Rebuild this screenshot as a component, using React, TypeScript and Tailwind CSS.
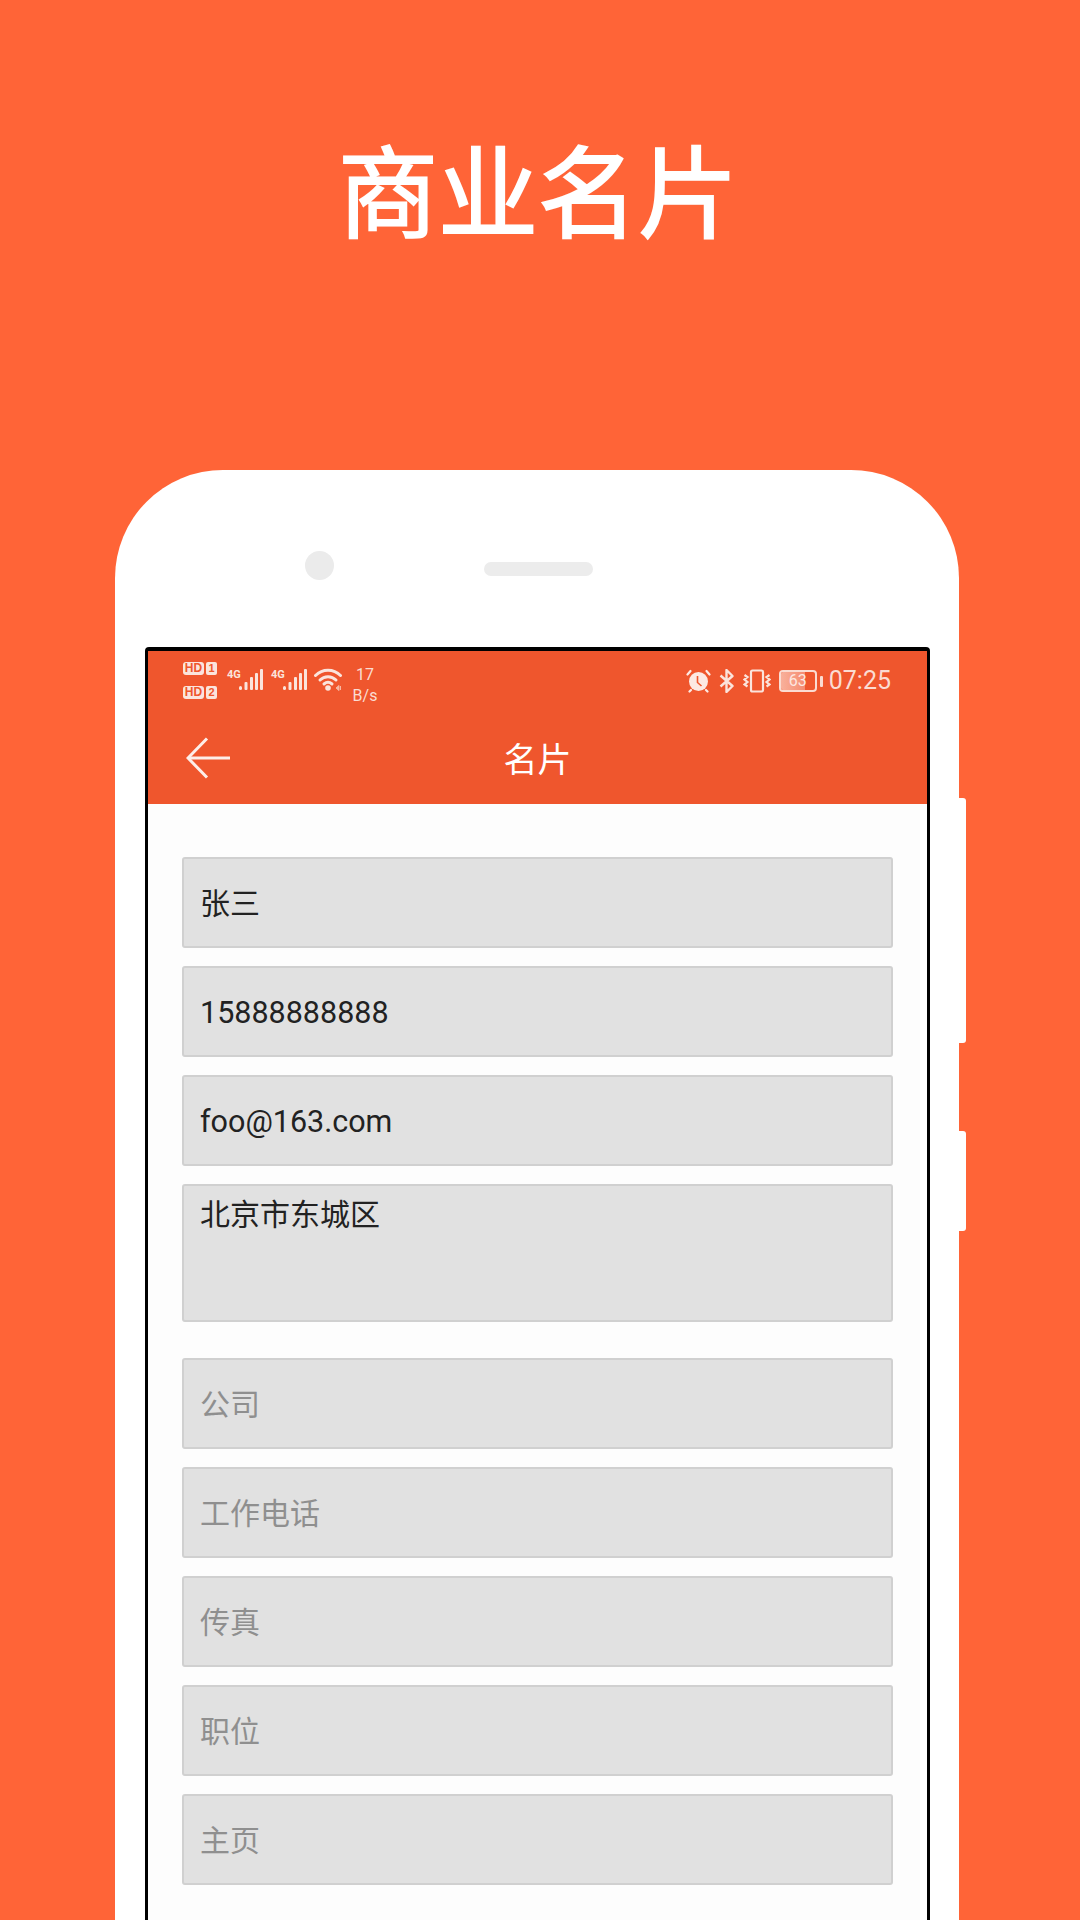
const cjk = "font-['Roboto','Noto_Sans_CJK_SC',sans-serif]"

function HdBadge({ n }: { n: string }) {
  return (
    <div className="flex items-center gap-[2px] h-[13px]">
      <span className="w-[21px] h-[13px] rounded-[3px] bg-[#fbe4dc] text-[#ef562d] text-[12px] leading-[13px] font-bold text-center font-['Liberation_Sans',sans-serif]">
        HD
      </span>
      <span className="w-[11px] h-[13px] rounded-[2px] bg-[#fbe4dc] text-[#ef562d] text-[11px] leading-[13px] font-bold text-center font-['Liberation_Sans',sans-serif]">
        {n}
      </span>
    </div>
  )
}

function Signal() {
  return (
    <div className="flex items-start h-[24px]">
      <span className="text-[#fbe4dc] text-[11px] leading-[11px] font-bold font-['Roboto',sans-serif] mt-[1px] w-[13px]">4G</span>
      <svg width="24" height="24" viewBox="0 0 24 24" className="-ml-[1px]">
        <g fill="#fbe4dc">
          <rect x="0" y="18" width="3" height="4" rx="1.5" />
          <rect x="5.5" y="14" width="3" height="8" rx="1" />
          <rect x="11" y="9" width="3" height="13" rx="1" />
          <rect x="16" y="5" width="3" height="17" rx="1" />
          <rect x="21" y="1" width="3" height="21" rx="1" />
        </g>
      </svg>
    </div>
  )
}

function Wifi() {
  return (
    <svg width="30" height="26" viewBox="0 0 30 26">
      <g fill="none" stroke="#fbe4dc" strokeWidth="3" strokeLinecap="round">
        <path d="M1.500 8.500C8.500 1.500 19.500 1.500 26.500 8.500" />
        <path d="M6 13C10.500 8.500 17.500 8.500 22 13" />
        <path d="M10 17C12.500 14.800 15.500 14.800 18 17" />
      </g>
      <circle cx="14" cy="21" r="2.800" fill="#fbe4dc" />
      <path d="M22 21l3-2.500v5zM26.500 19v4" stroke="#f7b7a2" strokeWidth="1" fill="#f7b7a2" />
    </svg>
  )
}

function Alarm() {
  return (
    <svg width="25" height="24" viewBox="0 0 25 24">
      <circle cx="12.500" cy="12.500" r="9.500" fill="#fde9e3" />
      <path d="M11.500 7v6.500l4 3.500" fill="none" stroke="#ef562d" strokeWidth="1.600" />
      <path d="M1.500 5.500L4.500 2M23.500 5.500L20.500 2M5 21l-1.500 1.500M20 21l1.500 1.500" stroke="#fde9e3" strokeWidth="2.200" strokeLinecap="round" />
    </svg>
  )
}

function Bluetooth() {
  return (
    <svg width="16" height="24" viewBox="0 0 16 24" fill="none" stroke="#fbe4dc" strokeWidth="2.400" strokeLinejoin="round">
      <path d="M1.500 6.500L13.500 17 7.500 23V1l6 6L1.500 17.500" />
    </svg>
  )
}

function Vibrate() {
  return (
    <svg width="28" height="24" viewBox="0 0 28 24" fill="none" stroke="#fbe4dc" strokeWidth="2.200">
      <rect x="8" y="1.500" width="12" height="21" rx="1.500" />
      <path d="M1.500 6l3 2-3 2.500 3 2.500-3 2.500 3 2M26.500 6l-3 2 3 2.500-3 2.500 3 2.500-3 2" />
    </svg>
  )
}

function Battery() {
  return (
    <div className="flex items-center gap-[3px]">
      <div className="relative w-[38px] h-[22px] border-2 border-[#fbdcd2] rounded-[4px] overflow-hidden">
        <div className="h-full w-[24px] bg-gradient-to-r from-[#f8b09b] to-[#f58c70]" />
        <span className="absolute inset-0 text-center text-[#fde8e1] text-[16px] leading-[18px] font-['Roboto',sans-serif]">63</span>
      </div>
      <div className="w-[3px] h-[11px] bg-[#fbdcd2] rounded-[1px]" />
    </div>
  )
}

function StatusBar() {
  return (
    <div className="h-[64px] pl-[35px] pr-[36px] flex items-start justify-between">
      <div className="flex items-start pt-[11px]">
        <div className="flex flex-col gap-[11px] w-[44px]">
          <HdBadge n="1" />
          <HdBadge n="2" />
        </div>
        <div className="flex items-start gap-[8px] pt-[6px]">
          <Signal />
          <Signal />
          <div className="ml-[-1px] mt-[-1px]"><Wifi /></div>
        </div>
        <div className="ml-[6px] w-[30px] text-center text-[#fbdcd2] text-[16px] leading-[21px] font-['Roboto',sans-serif] mt-[2px]">
          <div>17</div>
          <div>B/s</div>
        </div>
      </div>
      <div className="flex items-center gap-[8px] pt-[17px]">
        <Alarm />
        <Bluetooth />
        <Vibrate />
        <Battery />
        <span className="-ml-[2px] text-[#fbdcd2] text-[25px] leading-[26px] font-['Roboto',sans-serif]">07:25</span>
      </div>
    </div>
  )
}

function Field({ text, placeholder, tall, latin }: { text?: string; placeholder?: string; tall?: boolean; latin?: boolean }) {
  const color = placeholder ? "text-[#8f8f8f]" : "text-[#222222]"
  const size = latin ? "text-[30.5px]" : "text-[30px]"
  return (
    <div
      className={
        tall
          ? `h-[138px] pt-[9px] pl-[16px] bg-[#e1e1e1] border-2 border-[#d0d0d0] rounded-[3px] leading-[40px] ${size} ${color} ${cjk}`
          : `h-[91px] pt-[25px] pl-[16px] bg-[#e1e1e1] border-2 border-[#d0d0d0] rounded-[3px] leading-[40px] ${size} ${color} ${cjk}`
      }
    >
      {text || placeholder}
    </div>
  )
}

export default function App() {
  return (
    <main className="w-[1080px] h-[1920px] overflow-hidden bg-[#ff6437]">
      {/* Title */}
      <h1 className="pt-[137px] pb-[233px] pr-[4px] text-center text-white text-[100px] leading-[100px] font-normal [-webkit-text-stroke:2px_white] font-['Noto_Sans_CJK_SC',sans-serif]">
        商业名片
      </h1>

      {/* Phone */}
      <div className="relative ml-[115px] w-[844px] h-[1450px] bg-white rounded-t-[108px]">
        {/* Side keys */}
        <div className="absolute -right-[7px] top-[328px] w-[7px] h-[245px] bg-white rounded-r-[3px]" />
        <div className="absolute -right-[7px] top-[661px] w-[7px] h-[100px] bg-white rounded-r-[3px]" />

        {/* Camera and speaker */}
        <div className="h-[177px] pt-[81px] flex items-start">
          <div className="ml-[190px] w-[29px] h-[29px] rounded-full bg-[#ebebeb]" />
          <div className="ml-[150px] mt-[11px] w-[109px] h-[14px] rounded-full bg-[#ececec]" />
        </div>

        {/* Screen */}
        <div className="ml-[30px] w-[785px] h-[1273px] border-x-[3px] border-t-4 border-black rounded-t-[4px] bg-[#fdfdfd]">
          <div className="h-[153px] bg-[#ef562d]">
            <StatusBar />
            <div className="relative h-[89px] flex items-center justify-center">
              <svg width="46" height="42" viewBox="0 0 46 42" fill="none" stroke="#fdeee9" strokeWidth="3" className="absolute left-[38px] top-[22px]">
                <path d="M44 21H2" />
                <path d="M21 1.500L2 21l19 19.500" />
              </svg>
              <span className={`text-white text-[34px] leading-[40px] ${cjk}`}>名片</span>
            </div>
          </div>

          {/* Form */}
          <div className="pt-[53px] px-[34px] flex flex-col gap-[18px]">
            <Field text="张三" />
            <Field text="15888888888" latin />
            <Field text="foo@163.com" latin />
            <Field text="北京市东城区" tall />
            <div className="mt-[18px] flex flex-col gap-[18px]">
              <Field placeholder="公司" />
              <Field placeholder="工作电话" />
              <Field placeholder="传真" />
              <Field placeholder="职位" />
              <Field placeholder="主页" />
            </div>
          </div>
        </div>
      </div>
    </main>
  )
}
